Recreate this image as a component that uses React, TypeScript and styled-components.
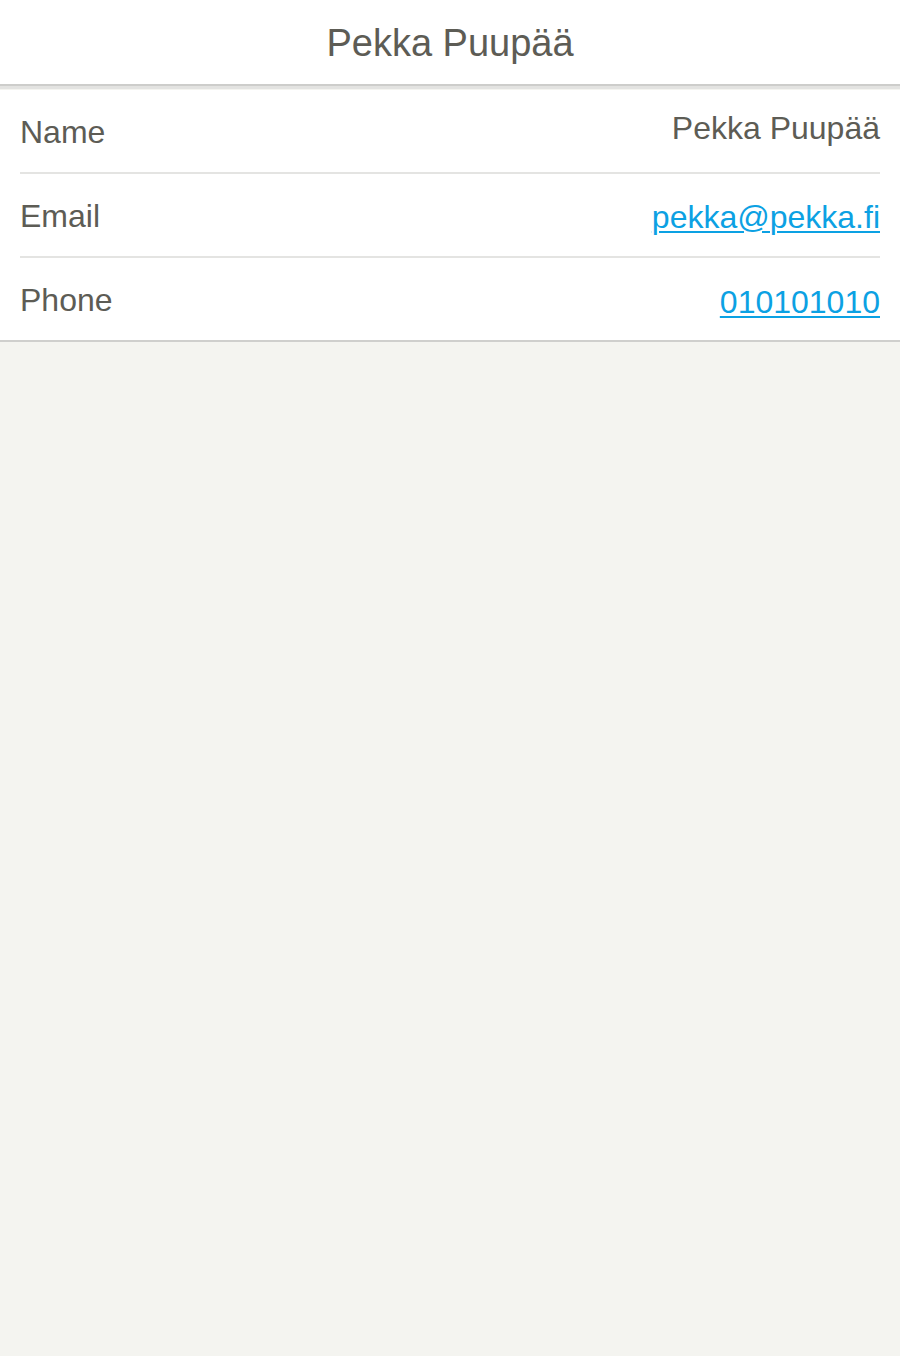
import React from "react"
import styled, { createGlobalStyle } from "styled-components"

const GlobalStyle = createGlobalStyle`
    html, body {
        margin: 0;
        padding: 0;
        background: #f4f4f0;
        font-family: "Liberation Sans", Arial, sans-serif;
        color: #5d5c55;
    }
`

const Page = styled.div`
    min-height: 1356px;
    background: #f4f4f0;
`

const Header = styled.header`
    height: 84px;
    background: #ffffff;
    border-bottom: 2px solid #cdcdcb;
    box-shadow: 0 3px 0 #e3e3e1;
    display: flex;
    align-items: center;
    justify-content: center;
`

const Title = styled.h1`
    margin: 2px 0 0;
    font-size: 38px;
    font-weight: normal;
    color: #5d5c55;
`

const List = styled.section`
    margin-top: 4px;
    background: #ffffff;
    padding: 0 20px;
    border-bottom: 2px solid #cfcfcd;
`

const Row = styled.div`
    height: 82px;
    display: flex;
    align-items: center;
    justify-content: space-between;
    border-bottom: 2px solid #e4e4e2;
    font-size: 32px;

    &:last-child {
        border-bottom: none;
    }
`

const Label = styled.span`
    margin-top: 3px;
`

const Value = styled.span<{ $shift: number }>`
    margin-top: ${p => (p.$shift > 0 ? p.$shift * 2 : 0)}px;
    margin-bottom: ${p => (p.$shift < 0 ? -p.$shift * 2 : 0)}px;
`

const Link = styled.a`
    color: #0ca1e3;
    text-decoration: underline;
    text-decoration-thickness: 2px;
    text-underline-offset: 3px;
`

interface IContact {
    name: string
    email: string
    phone: string
}

const contact: IContact = {
    name: "Pekka Puupää",
    email: "pekka@pekka.fi",
    phone: "010101010",
}

export default function App() {
    return (
        <Page>
            <GlobalStyle />
            <Header>
                <Title>{contact.name}</Title>
            </Header>
            <List>
                <Row>
                    <Label>Name</Label>
                    <Value $shift={-3}>{contact.name}</Value>
                </Row>
                <Row>
                    <Label>Email</Label>
                    <Value $shift={2}>
                        <Link href={"mailto:" + contact.email}>{contact.email}</Link>
                    </Value>
                </Row>
                <Row>
                    <Label>Phone</Label>
                    <Value $shift={3}>
                        <Link href={"tel:" + contact.phone}>{contact.phone}</Link>
                    </Value>
                </Row>
            </List>
        </Page>
    )
}
